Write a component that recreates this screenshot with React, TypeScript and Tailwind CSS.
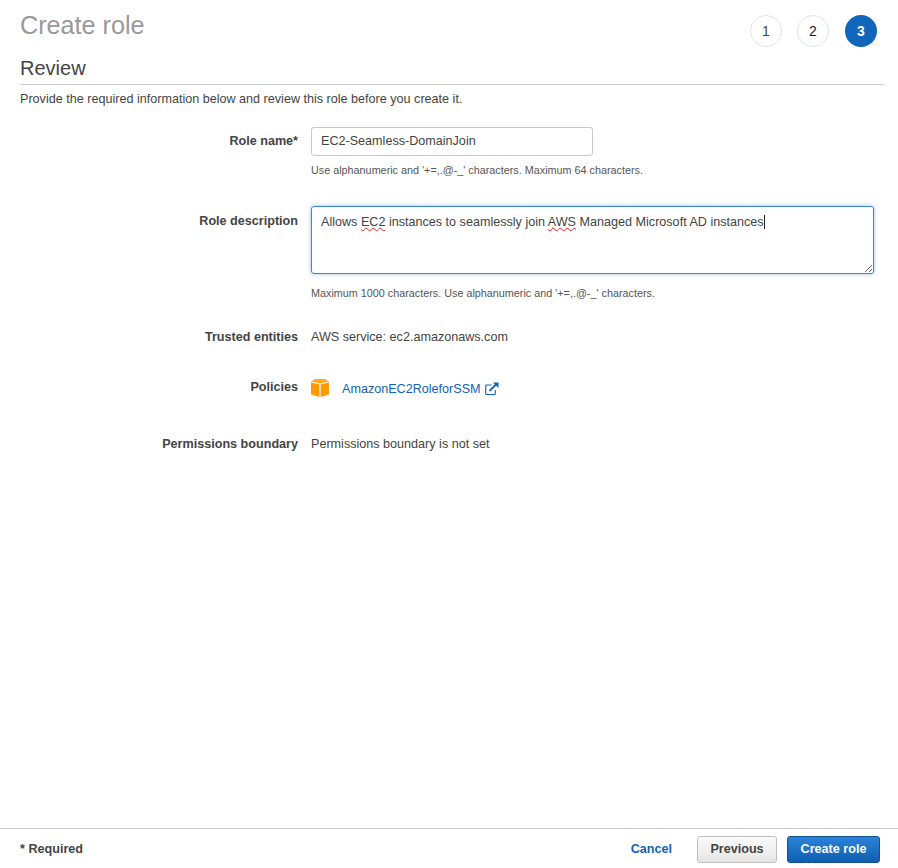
export default function App() {
  const Label = ({ children }: { children: React.ReactNode }) => (
    <div className="w-[278px] shrink-0 text-right font-bold text-[#444]">{children}</div>
  );
  const Squiggle = ({ children }: { children: React.ReactNode }) => (
    <span className="underline decoration-wavy decoration-[#e02020] decoration-1 underline-offset-1">{children}</span>
  );
  return (
    <div className="flex h-[868px] w-[898px] flex-col overflow-hidden bg-white font-['Liberation_Sans',Arial,sans-serif] text-[12.6px] text-[#444]">
      <div className="flex-1 pl-5 pr-[14px]">
        <div className="flex h-[56px] items-start justify-between">
          <h1 className="mt-[10px] text-[25.2px] leading-[30px] text-[#999]">Create role</h1>
          <div className="mt-[15px] mr-[7px] flex">
            <div className="flex size-8 items-center justify-center rounded-full border border-[#e1e4e5] text-sm text-[#444]">1</div>
            <div className="ml-[15px] flex size-8 items-center justify-center rounded-full border border-[#e1e4e5] text-sm text-[#222]">2</div>
            <div className="ml-[16px] flex size-8 items-center justify-center rounded-full bg-[#1166bb] text-sm font-bold text-white">3</div>
          </div>
        </div>
        <h2 className="h-[29px] border-b border-[#cccccc] text-[20px] leading-[24px] text-[#444]">Review</h2>
        <p className="mt-[6px] leading-[16px]">Provide the required information below and review this role before you create it.</p>

        <div className="mt-[20px] flex">
          <Label><span className="mt-[6px] block leading-[16px]">Role name*</span></Label>
          <div className="ml-[13px]">
            <div className="flex h-[29px] w-[282px] items-center rounded-[3px] border border-[#c8c8c8] px-[9px] text-[12.6px] text-[#444]">EC2-Seamless-DomainJoin</div>
            <p className="mt-[8px] text-[10.8px] leading-[13px] text-[#555]">Use alphanumeric and '+=,.@-_' characters. Maximum 64 characters.</p>
          </div>
        </div>

        <div className="mt-[29px] flex">
          <Label><span className="mt-[7px] block leading-[16px]">Role description</span></Label>
          <div className="ml-[13px]">
            <div className="h-[68px] w-[563px] resize overflow-auto rounded-[3px] border border-[#3b84d8] px-[9px] py-[7px] leading-[17px] shadow-[0_0_4px_rgba(59,132,216,0.5)]">
              Allows <Squiggle>EC2</Squiggle> instances to seamlessly join <Squiggle>AWS</Squiggle> Managed Microsoft AD instances
              <span className="border-r border-[#222]" />
            </div>
            <p className="mt-[13px] text-[10.8px] leading-[13px] text-[#555]">Maximum 1000 characters. Use alphanumeric and '+=,.@-_' characters.</p>
          </div>
        </div>

        <div className="mt-[29px] flex leading-[16px]">
          <Label>Trusted entities</Label>
          <div className="ml-[13px]">AWS service: ec2.amazonaws.com</div>
        </div>

        <div className="mt-[34px] flex leading-[16px]">
          <Label>Policies</Label>
          <div className="ml-[13px] flex items-center">
            <svg width="18" height="19" viewBox="0 0 18 19" className="-mt-px">
              <path d="M0 3.4 L4 1 H14 L18 3.4 L9 5.6 Z" fill="#ffa91f" />
              <path d="M0 4.4 L8.4 6.6 V19 L0 16.4 Z" fill="#ff9900" />
              <path d="M18 4.4 L9.6 6.6 V19 L18 16.4 Z" fill="#ff9900" />
            </svg>
            <a className="ml-[13px] mt-[2px] text-[#0f62b5]">AmazonEC2RoleforSSM</a>
            <svg width="14" height="14" viewBox="0 0 14 14" fill="none" stroke="#0f62b5" className="ml-[4px] mt-[2px]">
              <path d="M6.5 3 H1.5 Q0.7 3 0.7 3.8 V11.7 Q0.7 12.5 1.5 12.5 H9.5 Q10.3 12.5 10.3 11.7 V8" strokeWidth="1.1" />
              <path d="M4.5 9 L11 2.5" strokeWidth="1.8" />
              <path d="M8 0.5 H13.5 V6 Z" fill="#0f62b5" stroke="none" />
            </svg>
          </div>
        </div>

        <div className="mt-[39px] flex leading-[16px]">
          <Label>Permissions boundary</Label>
          <div className="ml-[13px]">Permissions boundary is not set</div>
        </div>
      </div>

      <div className="flex h-[40px] items-center justify-between border-t border-[#cccccc] pr-[18px] pl-5">
        <span className="mt-[1px] font-bold text-[#444]">* Required</span>
        <div className="mt-[2px] flex items-center">
          <a className="font-bold text-[#0f62b5]">Cancel</a>
          <button className="ml-[25px] h-[27px] w-[80px] rounded-[3px] border border-[#c0c0c0] bg-gradient-to-b from-[#fafafa] to-[#e6e6e6] font-bold text-[#444]">Previous</button>
          <button className="ml-[10px] h-[27px] w-[93px] rounded-[3px] border border-[#14528f] bg-gradient-to-b from-[#2a83da] to-[#0f5fb0] font-bold text-white">Create role</button>
        </div>
      </div>
    </div>
  );
}
